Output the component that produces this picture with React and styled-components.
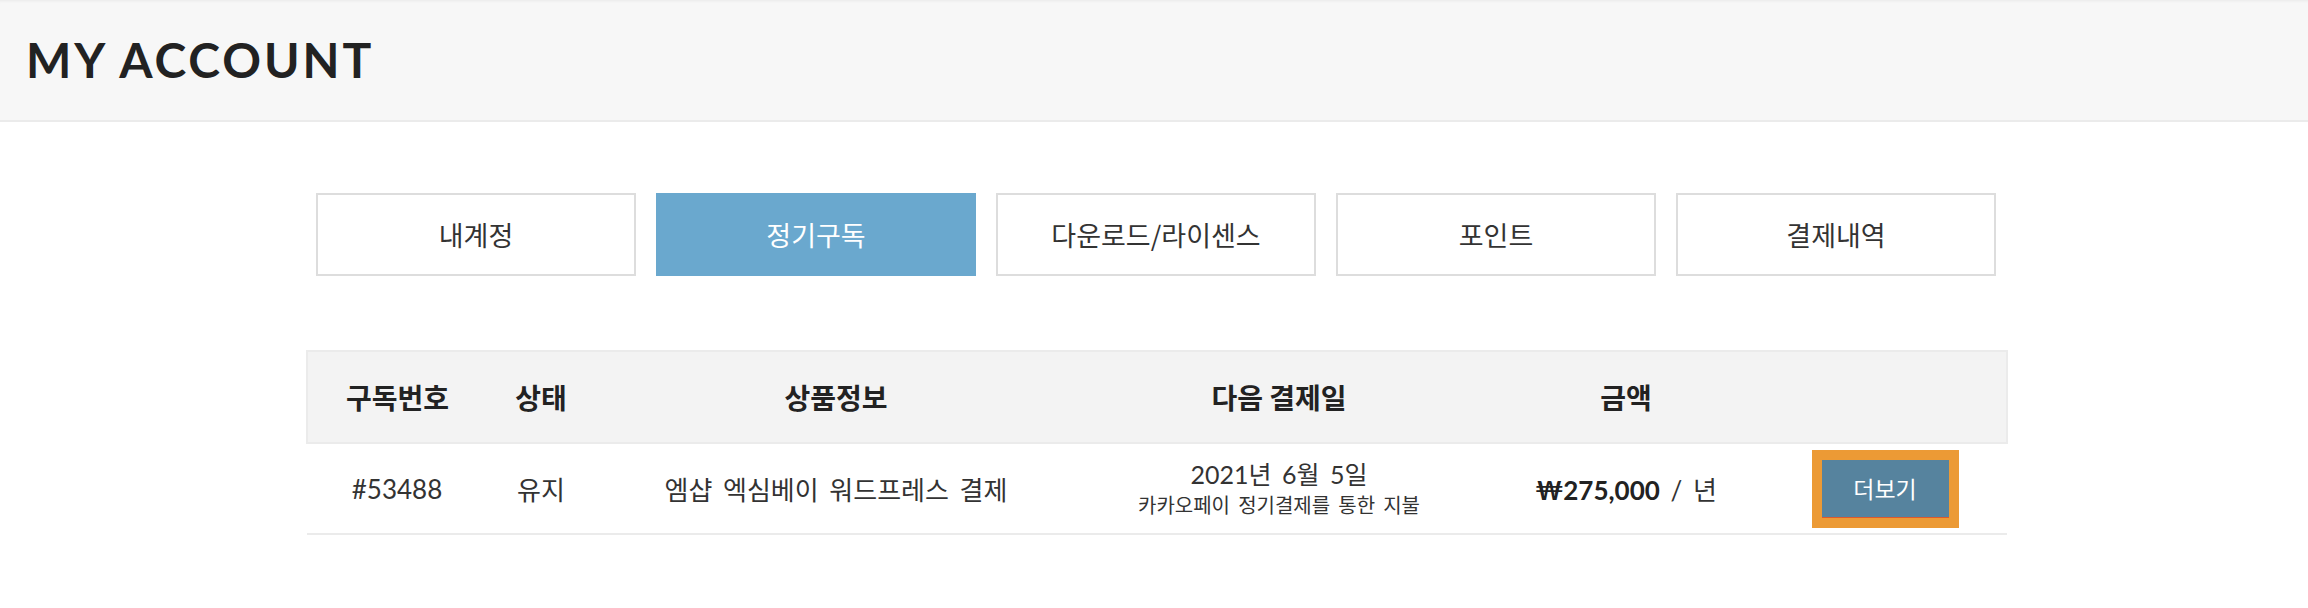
import React, {useState} from "react";
import styled, {createGlobalStyle} from "styled-components";

const GlobalStyle = createGlobalStyle`
    html, body {
        margin: 0;
        padding: 0;
        background: #fff;
    }
    body {
        font-family: Lato, "Noto Sans CJK KR", sans-serif;
        color: #333;
    }
`;

const tabs = ["내계정", "정기구독", "다운로드/라이센스", "포인트", "결제내역"];

const columns = [
    {label: "구독번호", width: 180},
    {label: "상태", width: 108},
    {label: "상품정보", width: 482},
    {label: "다음 결제일", width: 404},
    {label: "금액", width: 290},
    {label: "", width: 236},
];

export default function App() {
    const [active, setActive] = useState(1);
    return (
        <>
            <GlobalStyle/>
            <PageHeader>
                <Title>MY ACCOUNT</Title>
            </PageHeader>
            <Wrapper>
                <TabList>
                    {tabs.map((t, i) => (
                        <Tab key={t} $active={i === active} onClick={() => setActive(i)}>
                            {t}
                        </Tab>
                    ))}
                </TabList>
                <Table>
                    <colgroup>
                        {columns.map((c, i) => <col key={i} style={{width: c.width}}/>)}
                    </colgroup>
                    <thead>
                    <tr>
                        {columns.map((c, i) => <Th key={i}>{c.label}</Th>)}
                    </tr>
                    </thead>
                    <tbody>
                    <tr>
                        <Td>#53488</Td>
                        <Td>유지</Td>
                        <Td>엠샵 엑심베이 워드프레스 결제</Td>
                        <Td>
                            <DateText>2021년 6월 5일</DateText>
                            <SubText>카카오페이 정기결제를 통한 지불</SubText>
                        </Td>
                        <Td>
                            <Price>₩275,000</Price> / 년
                        </Td>
                        <ActionTd>
                            <MoreButton>더보기</MoreButton>
                        </ActionTd>
                    </tr>
                    </tbody>
                </Table>
            </Wrapper>
        </>
    );
}

const PageHeader = styled.header`
    height: 120px;
    background: #f7f7f7;
    border-bottom: 2px solid #ebebeb;
    box-shadow: inset 0 3px 3px -2px rgba(0, 0, 0, 0.06);
    display: flex;
    align-items: center;
    padding-left: 26px;
`;

const Title = styled.h1`
    margin: 0;
    font-family: Lato, sans-serif;
    font-weight: 700;
    font-size: 48px;
    line-height: 1;
    letter-spacing: 2.9px;
    color: #222;
`;

const Wrapper = styled.main`
    width: 1700px;
    margin: 0 auto;
    padding-left: 4px;
`;

const TabList = styled.nav`
    display: grid;
    grid-template-columns: repeat(5, 1fr);
    gap: 20px;
    padding: 0 10px;
    margin-top: 71px;
`;

const Tab = styled.button`
    height: 83px;
    box-sizing: border-box;
    border: 2px solid ${p => p.$active ? "#6aa8ce" : "#dddddd"};
    background: ${p => p.$active ? "#6aa8ce" : "#fff"};
    color: ${p => p.$active ? "#fff" : "#333"};
    font-family: "Noto Sans CJK KR", sans-serif;
    font-size: 27px;
    font-weight: 400;
    cursor: pointer;
    padding: 0;
`;

const Table = styled.table`
    width: 1700px;
    margin-top: 74px;
    border-collapse: collapse;
    table-layout: fixed;
`;

const Th = styled.th`
    height: 90px;
    padding: 0;
    background: #f3f3f3;
    border-top: 2px solid #ebebeb;
    border-bottom: 2px solid #ebebeb;
    font-family: "Noto Sans CJK KR", sans-serif;
    font-size: 28px;
    font-weight: 700;
    color: #222;
    text-align: center;

    &:first-child {
        border-left: 2px solid #ebebeb;
    }
    &:last-child {
        border-right: 2px solid #ebebeb;
    }
`;

const Td = styled.td`
    height: 89px;
    padding: 0;
    border-bottom: 2px solid #ebebeb;
    font-size: 26px;
    text-align: center;
    color: #333;
    word-spacing: 4px;
`;

const ActionTd = styled(Td)`
    padding-right: 8px;
`;

const DateText = styled.div`
    font-size: 25px;
    line-height: 30px;
`;

const SubText = styled.div`
    font-size: 20px;
    line-height: 26px;
    margin-top: 3px;
    word-spacing: 3px;
`;

const Price = styled.strong`
    font-weight: 700;
    color: #222;
`;

const MoreButton = styled.button`
    width: 127px;
    height: 58px;
    background: #56839e;
    border: none;
    border-bottom: 1px solid #dc5a2c;
    outline: 10px solid #ec9a35;
    color: #fff;
    font-family: "Noto Sans CJK KR", sans-serif;
    font-size: 23px;
    padding: 0;
    cursor: pointer;
`;
